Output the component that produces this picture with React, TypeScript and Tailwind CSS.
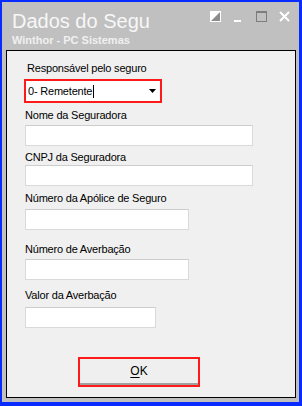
const uiFont = { fontFamily: '"Liberation Sans", Arial, sans-serif' };

function Label({ text, className }: { text: string; className: string }) {
  return (
    <div className={`text-[11px] leading-[14px] tracking-[-0.2px] text-black ${className}`}>{text}</div>
  );
}

function TextBox({ className }: { className: string }) {
  return (
    <div
      className={`h-[21px] bg-white border border-[#d9d9d9] border-t-[#cdcdcd] ${className}`}
    />
  );
}

function TitleIcons() {
  return (
    <div className="ml-auto mr-[5px] mt-[9px] flex gap-[11px]">
      {/* restore-ish */}
      <svg width="12" height="12" viewBox="0 0 12 12">
        <rect x="0" y="0" width="11" height="11" fill="#ffffff" />
        <polygon points="10,1 10,10 1,10" fill="#8c8c8c" />
      </svg>
      {/* minimize */}
      <svg width="12" height="12" viewBox="0 0 12 12">
        <rect x="1" y="9" width="7" height="2" fill="#ffffff" />
      </svg>
      {/* maximize (disabled) */}
      <svg width="12" height="12" viewBox="0 0 12 12">
        <rect x="0.5" y="0.5" width="10" height="10" fill="none" stroke="#7d7d7d" />
        <rect x="0" y="0" width="11" height="2" fill="#7d7d7d" />
      </svg>
      {/* close */}
      <svg width="12" height="12" viewBox="0 0 12 12">
        <path d="M1 1 L10 10 M10 1 L1 10" stroke="#ffffff" strokeWidth="2" />
      </svg>
    </div>
  );
}

export default function App() {
  return (
    <div
      className="w-[302px] h-[406px] bg-[#0a2bff] pl-[2px] pt-[2px] pr-[3px] pb-[4px]"
      style={uiFont}
    >
      <div className="h-full bg-[#c0c0c0] flex flex-col pl-[4px] pr-[3px] pb-[4px]">
        {/* Title bar */}
        <div className="h-[48px] flex">
          <div className="pl-[6px]">
            <div className="mt-[7px] text-[20px] leading-[24px] text-[#f7f7f7]">Dados do Segu</div>
            <div className="mt-[1px] text-[11px] leading-[13px] font-bold text-[#f0f0f0]">
              Winthor - PC Sistemas
            </div>
          </div>
          <TitleIcons />
        </div>

        {/* Form panel */}
        <div className="flex-1 border border-black bg-[#f0f0f0] flex flex-col items-start pt-[10px]">
          <Label text="Responsável pelo seguro" className="ml-[20px]" />

          {/* Combo, highlighted */}
          <div className="mt-[4px] ml-[17px] w-[138px] h-[24px] border-2 border-[#ff1a1a] bg-white flex items-center pl-[2px] pr-[4px]">
            <span className="text-[11px] leading-[14px] tracking-[-0.2px] text-black">0- Remetente</span>
            <span className="ml-[1px] w-px h-[13px] bg-black" />
            <svg className="ml-auto" width="7" height="4" viewBox="0 0 7 4">
              <polygon points="0,0 7,0 3.5,4" fill="#000000" />
            </svg>
          </div>

          <Label text="Nome da Seguradora" className="ml-[18px] mt-[5px]" />
          <TextBox className="ml-[18px] mt-[3px] w-[228px]" />

          <Label text="CNPJ da Seguradora" className="ml-[18px] mt-[4px]" />
          <TextBox className="ml-[18px] mt-[1px] w-[228px]" />

          <Label text="Número da Apólice de Seguro" className="ml-[18px] mt-[5px]" />
          <TextBox className="ml-[18px] mt-[4px] w-[164px]" />

          <Label text="Número de Averbação" className="ml-[18px] mt-[12px]" />
          <TextBox className="ml-[18px] mt-[3px] w-[164px]" />

          <Label text="Valor da Averbação" className="ml-[18px] mt-[8px]" />
          <TextBox className="ml-[18px] mt-[5px] w-[131px]" />

          {/* OK button, highlighted */}
          <div className="mt-[29px] ml-[71px] w-[122px] h-[30px] border-2 border-[#ff1a1a]">
            <button className="w-full h-full bg-[#efefef] border-b-2 border-[#a0a0a0] flex items-center justify-center text-[12px] leading-[14px] text-black">
              <span>
                <span className="underline underline-offset-2">O</span>K
              </span>
            </button>
          </div>
        </div>
      </div>
    </div>
  );
}
